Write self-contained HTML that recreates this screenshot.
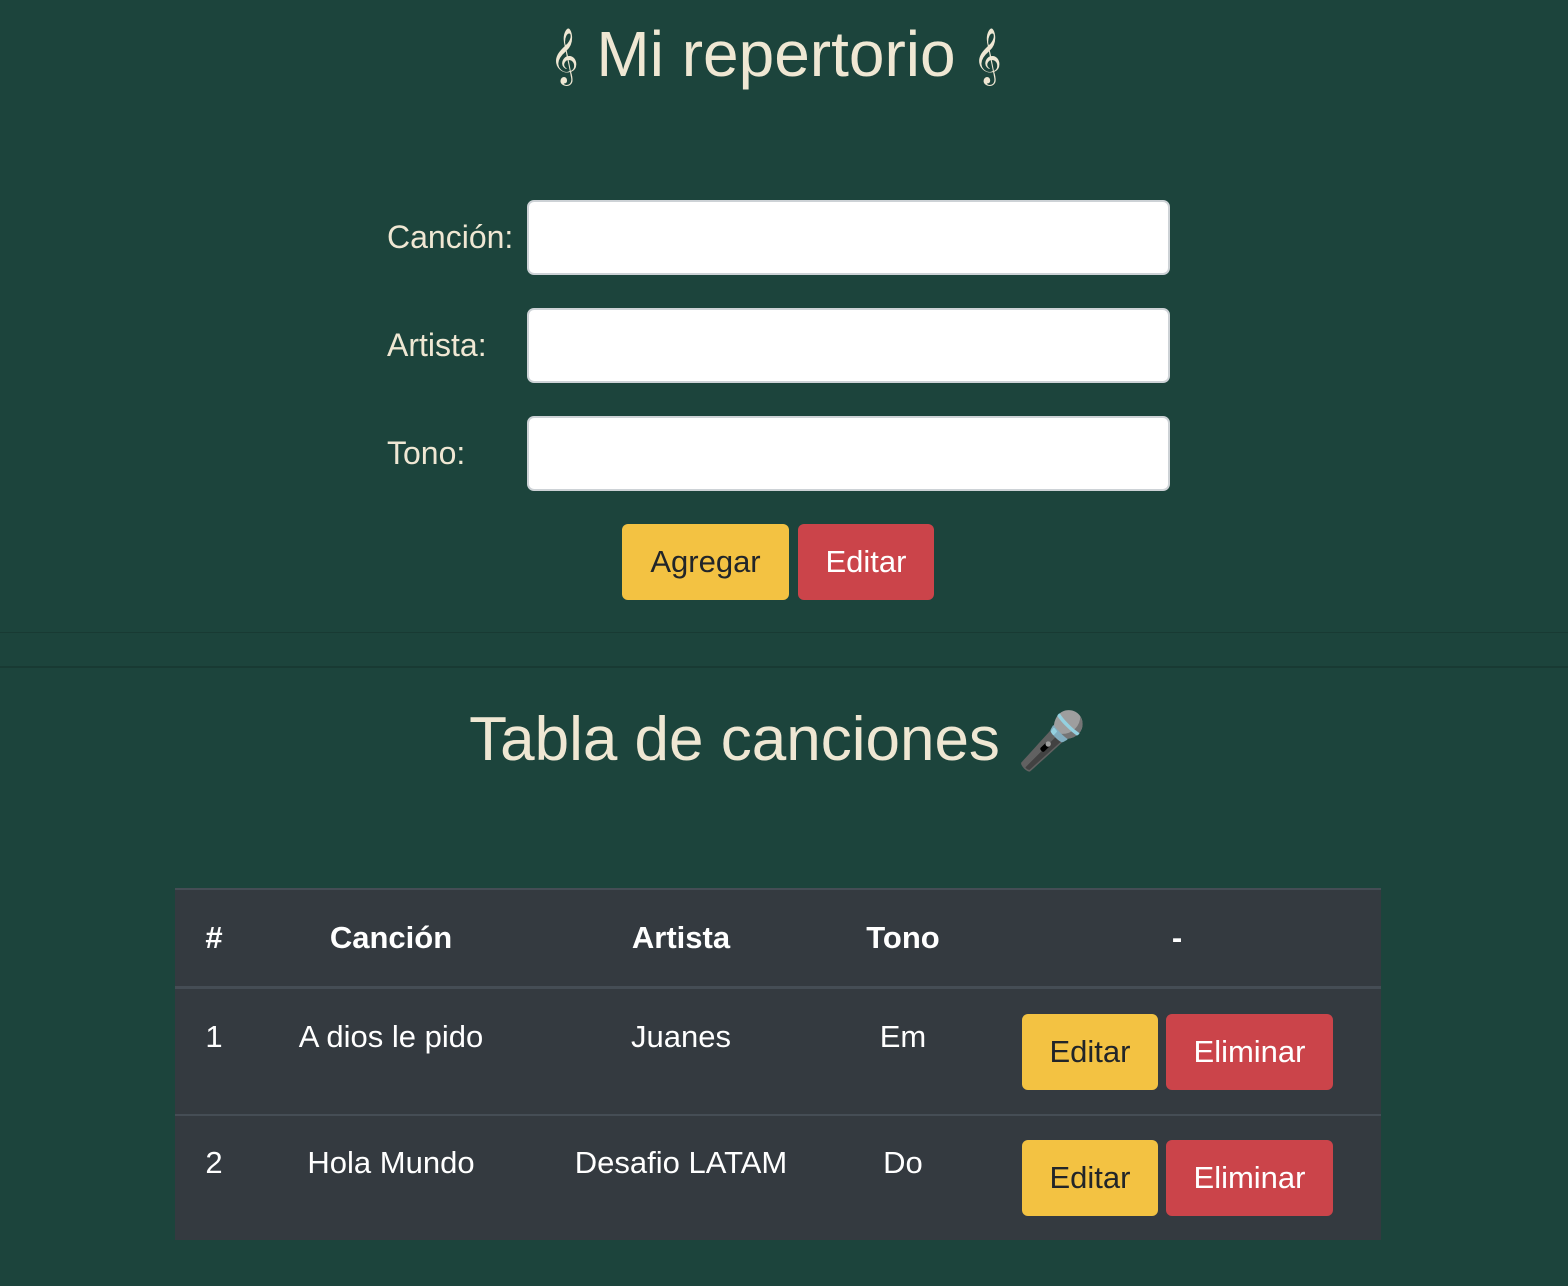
<!DOCTYPE html>
<html><head><meta charset="utf-8">
<style>
*{margin:0;padding:0;box-sizing:border-box}
html,body{width:1568px;height:1286px;background:#1c443c;overflow:hidden;font-family:"Liberation Sans","DejaVu Sans",sans-serif}
.a{position:absolute}
.t{color:#efe7d3;white-space:nowrap}
.lbl{font-size:32px;color:#efe7d3;position:absolute}
.inp{position:absolute;left:527px;width:643px;height:75px;background:#fff;border:2px solid #cdd2d6;border-radius:7px}
.btn{position:absolute;border-radius:6px;font-size:31px;display:flex;align-items:center;justify-content:center}
.y{background:#f3c242;color:#212529}
.r{background:#cb444a;color:#fff}
.c{position:absolute;color:#fff;font-size:31px;text-align:center;white-space:nowrap}
.h{font-weight:bold}
</style></head><body>
<div class="a t" style="left:-8px;width:1568px;top:14px;text-align:center;font-size:64px;line-height:80px">
<span style="font-size:48px;font-family:'DejaVu Sans',sans-serif;vertical-align:4px">𝄞</span> Mi repertorio <span style="font-size:48px;font-family:'DejaVu Sans',sans-serif;vertical-align:4px">𝄞</span></div>

<div class="lbl" style="left:387px;top:219px">Canción:</div>
<div class="lbl" style="left:387px;top:327px">Artista:</div>
<div class="lbl" style="left:387px;top:435px">Tono:</div>
<div class="inp" style="top:200px"></div>
<div class="inp" style="top:308px"></div>
<div class="inp" style="top:416px"></div>
<div class="btn y" style="left:622px;top:524px;width:167px;height:76px">Agregar</div>
<div class="btn r" style="left:798px;top:524px;width:136px;height:76px">Editar</div>

<div class="a" style="left:0;top:632px;width:1568px;height:1px;background:#183a33"></div>
<div class="a" style="left:0;top:666px;width:1568px;height:2px;background:#183a33"></div>

<div class="a t" style="left:-6px;width:1568px;top:700px;text-align:center;font-size:62px;line-height:80px">Tabla de canciones <span style="font-size:56px;font-family:'DejaVu Sans',sans-serif">🎤</span></div>

<div class="a" style="left:175px;top:888px;width:1206px;height:352px;background:#343a40;border-top:2px solid #454d55"></div>
<div class="a" style="left:175px;top:986px;width:1206px;height:3px;background:#454d55"></div>
<div class="a" style="left:175px;top:1114px;width:1206px;height:2px;background:#454d55"></div>

<div class="c h" style="left:164px;width:100px;top:920px">#</div>
<div class="c h" style="left:241px;width:300px;top:920px">Canción</div>
<div class="c h" style="left:531px;width:300px;top:920px">Artista</div>
<div class="c h" style="left:803px;width:200px;top:920px">Tono</div>
<div class="c h" style="left:1077px;width:200px;top:920px">-</div>

<div class="c" style="left:164px;width:100px;top:1019px">1</div>
<div class="c" style="left:241px;width:300px;top:1019px">A dios le pido</div>
<div class="c" style="left:531px;width:300px;top:1019px">Juanes</div>
<div class="c" style="left:803px;width:200px;top:1019px">Em</div>
<div class="btn y" style="left:1022px;top:1014px;width:136px;height:76px">Editar</div>
<div class="btn r" style="left:1166px;top:1014px;width:167px;height:76px">Eliminar</div>

<div class="c" style="left:164px;width:100px;top:1145px">2</div>
<div class="c" style="left:241px;width:300px;top:1145px">Hola Mundo</div>
<div class="c" style="left:531px;width:300px;top:1145px">Desafio LATAM</div>
<div class="c" style="left:803px;width:200px;top:1145px">Do</div>
<div class="btn y" style="left:1022px;top:1140px;width:136px;height:76px">Editar</div>
<div class="btn r" style="left:1166px;top:1140px;width:167px;height:76px">Eliminar</div>
</body></html>
